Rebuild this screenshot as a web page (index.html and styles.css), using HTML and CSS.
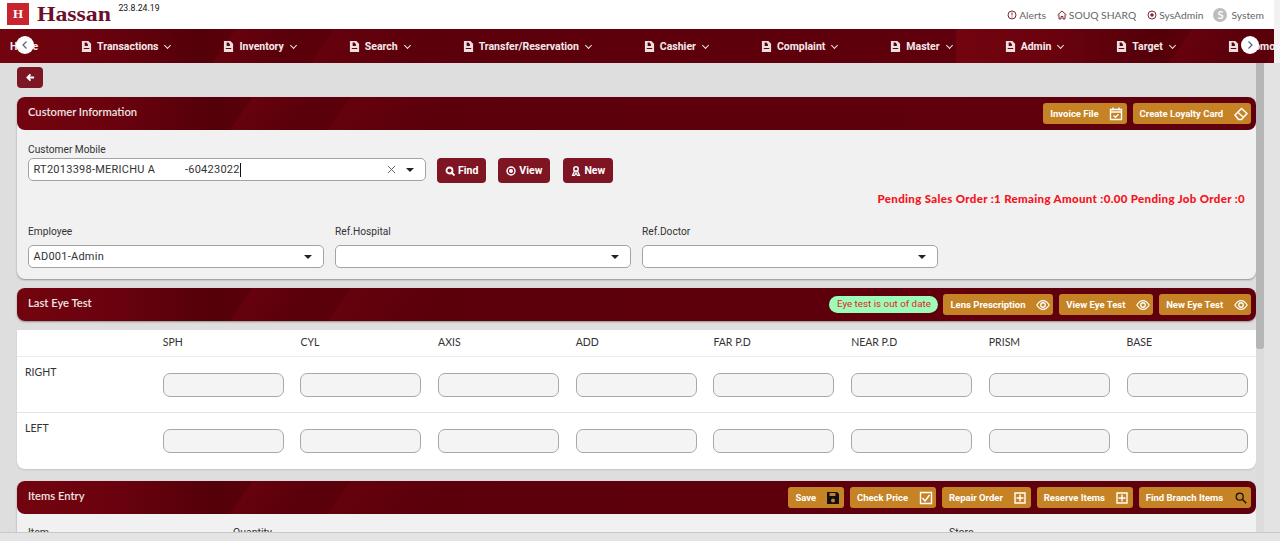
FILE: index.html
```html
<!DOCTYPE html>
<html lang="en">
<head>
    <meta charset="UTF-8">
    <title>Hassan</title>
    <link rel="stylesheet" href="styles.css">
</head>
<body>
    <!-- shared icons -->
    <svg class="icon-defs" width="0" height="0">
        <symbol id="i-doc" viewBox="0 0 12 12">
            <path fill="currentColor" fill-rule="evenodd" d="M1 0h7l3 3v9H1zM3 7.500v1.200h6V7.500zM4 1.500v4h3.500v-2L6 1.500z"/>
        </symbol>
        <symbol id="i-eye" viewBox="0 0 16 16">
            <path fill="none" stroke="currentColor" stroke-width="1.400" d="M1 8c2-3.400 4.400-5 7-5s5 1.600 7 5c-2 3.400-4.400 5-7 5s-5-1.600-7-5z"/>
            <circle cx="8" cy="8" r="2.600" fill="none" stroke="currentColor" stroke-width="1.500"/>
        </symbol>
        <symbol id="i-plus" viewBox="-1 -1 14 14">
            <path fill="none" stroke="currentColor" stroke-width="1.400" d="M1 1h10v10H1zM6 2.500v7M2.500 6h7"/>
        </symbol>
    </svg>

    <header class="topbar">
        <div class="brand">
            <span class="brand-mark">H</span>
            <span class="brand-name">Hassan</span>
            <span class="version">23.8.24.19</span>
        </div>
        <div class="top-links">
            <span class="top-link">
                <svg class="top-icon" viewBox="0 0 10 10"><circle cx="5" cy="5" r="4" fill="none" stroke="currentColor"/><path d="M5 2.500v3M5 6.500v1" stroke="currentColor"/></svg>
                Alerts
            </span>
            <span class="top-link">
                <svg class="top-icon" viewBox="0 0 10 10"><path d="M.5 5 5 1l4.500 4M2 4.500V9h2V6.500h2V9h2V4.500" fill="none" stroke="currentColor"/></svg>
                SOUQ SHARQ
            </span>
            <span class="top-link">
                <svg class="top-icon" viewBox="0 0 10 10"><circle cx="5" cy="5" r="4" fill="none" stroke="currentColor"/><circle cx="5" cy="5" r="1.800" fill="currentColor"/></svg>
                SysAdmin
            </span>
            <span class="top-link user-link"><span class="avatar">S</span>System</span>
        </div>
    </header>

    <nav class="menu banner">
        <a class="menu-item menu-home">Home</a>
        <a class="menu-item"><svg class="menu-doc"><use href="#i-doc"/></svg>Transactions<span class="chev"></span></a>
        <a class="menu-item"><svg class="menu-doc"><use href="#i-doc"/></svg>Inventory<span class="chev"></span></a>
        <a class="menu-item"><svg class="menu-doc"><use href="#i-doc"/></svg>Search<span class="chev"></span></a>
        <a class="menu-item"><svg class="menu-doc"><use href="#i-doc"/></svg>Transfer/Reservation<span class="chev"></span></a>
        <a class="menu-item"><svg class="menu-doc"><use href="#i-doc"/></svg>Cashier<span class="chev"></span></a>
        <a class="menu-item"><svg class="menu-doc"><use href="#i-doc"/></svg>Complaint<span class="chev"></span></a>
        <a class="menu-item"><svg class="menu-doc"><use href="#i-doc"/></svg>Master<span class="chev"></span></a>
        <a class="menu-item"><svg class="menu-doc"><use href="#i-doc"/></svg>Admin<span class="chev"></span></a>
        <a class="menu-item"><svg class="menu-doc"><use href="#i-doc"/></svg>Target<span class="chev"></span></a>
        <a class="menu-item"><svg class="menu-doc"><use href="#i-doc"/></svg>Promotion<span class="chev"></span></a>
        <span class="menu-arrow arrow-left"><svg viewBox="0 0 10 10"><path d="M6.500 1.500 3 5l3.500 3.500" fill="none" stroke="#5b6078" stroke-width="1.200"/></svg></span>
        <span class="menu-arrow arrow-right"><svg viewBox="0 0 10 10"><path d="M3.500 1.500 7 5 3.500 8.500" fill="none" stroke="#5b6078" stroke-width="1.200"/></svg></span>
    </nav>

    <main class="content">
        <button class="back-btn"><svg viewBox="0 0 10 10"><path d="M5 1.500 1.500 5 5 8.500M2 5h7" fill="none" stroke="#fff" stroke-width="2"/></svg></button>

        <!-- Customer Information -->
        <section class="card card-grey card-customer">
            <div class="card-head banner">
                <h2>Customer Information</h2>
                <div class="head-actions">
                    <button class="gold-btn">Invoice File
                        <svg class="gold-icon" viewBox="0 0 14 14"><path d="M1.500 2.500h11v10h-11zM1.500 5h11M4 .5v3M10 .5v3" fill="none" stroke="currentColor" stroke-width="1.400"/><path d="m4.500 8.500 2 1.800 3-3" fill="none" stroke="currentColor" stroke-width="1.400"/></svg>
                    </button>
                    <button class="gold-btn">Create Loyalty Card
                        <svg class="gold-icon" viewBox="0 0 14 14"><path d="M1 8 7.500 1.500 13 6.500 7.500 12.500H4.500zM4 5.500 9.800 10.500" fill="none" stroke="currentColor" stroke-width="1.500"/></svg>
                    </button>
                </div>
            </div>
            <div class="customer-body">
                <label class="field-label">Customer Mobile</label>
                <div class="find-row">
                    <div class="select select-mobile">
                        <span class="select-text">RT2013398-MERICHU A          -60423022</span><span class="text-cursor"></span>
                        <svg class="clear-x" viewBox="0 0 10 10"><path d="m1 1 8 8M9 1 1 9" stroke="#555" fill="none"/></svg>
                        <span class="caret"></span>
                    </div>
                    <button class="red-btn"><svg viewBox="0 0 10 10"><circle cx="4.500" cy="4.500" r="3" fill="none" stroke="#fff" stroke-width="1.800"/><path d="m6.500 6.500 3 3" stroke="#fff" stroke-width="1.800"/></svg>Find</button>
                    <button class="red-btn"><svg viewBox="0 0 10 10"><circle cx="5" cy="5" r="4" fill="none" stroke="#fff" stroke-width="1.400"/><circle cx="5" cy="5" r="2" fill="#fff"/></svg>View</button>
                    <button class="red-btn"><svg viewBox="0 0 10 10"><circle cx="5" cy="3" r="2.200" fill="none" stroke="#fff" stroke-width="1.500"/><path d="m3.500 5-2 4.500h2L5 7l1.500 2.500h2L6.500 5" fill="none" stroke="#fff" stroke-width="1.300"/></svg>New</button>
                </div>
                <p class="pending">Pending Sales Order :1 Remaing Amount :0.00 Pending Job Order :0</p>
                <div class="select-row">
                    <div class="select-col">
                        <label class="field-label">Employee</label>
                        <div class="select"><span class="select-text">AD001-Admin</span><span class="caret"></span></div>
                    </div>
                    <div class="select-col">
                        <label class="field-label">Ref.Hospital</label>
                        <div class="select"><span class="select-text"></span><span class="caret"></span></div>
                    </div>
                    <div class="select-col">
                        <label class="field-label">Ref.Doctor</label>
                        <div class="select"><span class="select-text"></span><span class="caret"></span></div>
                    </div>
                </div>
            </div>
        </section>

        <!-- Last Eye Test -->
        <section class="card">
            <div class="card-head banner">
                <h2>Last Eye Test</h2>
                <div class="head-actions">
                    <span class="status-pill">Eye test is out of date</span>
                    <button class="gold-btn">Lens Prescription <svg class="gold-icon"><use href="#i-eye"/></svg></button>
                    <button class="gold-btn">View Eye Test <svg class="gold-icon"><use href="#i-eye"/></svg></button>
                    <button class="gold-btn">New Eye Test <svg class="gold-icon"><use href="#i-eye"/></svg></button>
                </div>
            </div>
        </section>
        <section class="eye-table">
            <div class="eye-row eye-head">
                <span></span><span>SPH</span><span>CYL</span><span>AXIS</span><span>ADD</span><span>FAR P.D</span><span>NEAR P.D</span><span>PRISM</span><span>BASE</span>
            </div>
            <div class="eye-row eye-values">
                <span>RIGHT</span>
                <input class="eye-input"><input class="eye-input"><input class="eye-input"><input class="eye-input">
                <input class="eye-input"><input class="eye-input"><input class="eye-input"><input class="eye-input">
            </div>
            <div class="eye-row eye-values eye-last">
                <span>LEFT</span>
                <input class="eye-input"><input class="eye-input"><input class="eye-input"><input class="eye-input">
                <input class="eye-input"><input class="eye-input"><input class="eye-input"><input class="eye-input">
            </div>
        </section>

        <!-- Items Entry -->
        <section class="card card-grey card-items">
            <div class="card-head banner">
                <h2>Items Entry</h2>
                <div class="head-actions">
                    <button class="gold-btn">Save
                        <svg class="gold-icon icon-dark" viewBox="0 0 14 14"><path fill="currentColor" fill-rule="evenodd" d="M1 1h10l2 2v10H1zM3.500 2v3h6V2zM7 7.500a2 2 0 1 0 0 4 2 2 0 0 0 0-4z"/></svg>
                    </button>
                    <button class="gold-btn">Check Price
                        <svg class="gold-icon" viewBox="0 0 14 14"><path d="M1.500 1.500h11v11h-11zM3.500 7l2.500 3 4.500-6" fill="none" stroke="currentColor" stroke-width="1.400"/></svg>
                    </button>
                    <button class="gold-btn">Repair Order <svg class="gold-icon"><use href="#i-plus"/></svg></button>
                    <button class="gold-btn">Reserve Items <svg class="gold-icon"><use href="#i-plus"/></svg></button>
                    <button class="gold-btn">Find Branch Items
                        <svg class="gold-icon icon-dark" viewBox="-1 -1 16 16"><circle cx="5.500" cy="5.500" r="4" fill="none" stroke="currentColor" stroke-width="1.400"/><path d="m8.500 8.500 4.500 4.500" stroke="currentColor" stroke-width="1.600"/></svg>
                    </button>
                </div>
            </div>
            <div class="items-labels">
                <span>Item</span><span>Quantity</span><span>Store</span>
            </div>
        </section>
    </main>

    <div class="scroll-v"><span class="scroll-thumb"></span></div>
    <div class="scroll-h"></div>
</body>
</html>
```

FILE: styles.css
```css
html, body {
    margin: 0;
    height: 541px;
    overflow: hidden;
}
body {
    background: linear-gradient(#f2f2f2 63px, #e3e3e3 63px);
    font-family: "Roboto", Arial, sans-serif;
    color: #333;
}
.icon-defs {
    position: absolute;
}
button {
    font-family: inherit;
    border: none;
    padding: 0;
    cursor: pointer;
}

/* repeated dark red artwork used on the menu and card titles */
.banner {
    background-color: #5f000c;
    background-image:
        linear-gradient(125deg, transparent 0, transparent 24%, rgba(115, 3, 15, .5) 24.2%, rgba(95, 0, 12, 0) 30%, transparent 34%, rgba(115, 3, 15, .4) 34.2%, rgba(95, 0, 12, 0) 44%),
        linear-gradient(90deg, #72040f 0, #6a020e 10%, #530009 21%, #5a000b 24%, #5f000c 100%);
    background-size: 956px 100%;
}
.card-head.banner {
    background-repeat: no-repeat;
}

/* top bar */
.topbar {
    width: 1274px;
    height: 29px;
    background-color: #fff;
    display: flex;
    justify-content: space-between;
}
.brand {
    display: flex;
    align-items: flex-start;
    padding: 3px 0 0 7px;
}
.brand-mark {
    width: 22px;
    height: 22px;
    background-color: #c8252e;
    color: #fff;
    font-family: "Liberation Serif", serif;
    font-weight: bold;
    font-size: 13px;
    line-height: 22px;
    text-align: center;
}
.brand-name {
    margin-left: 8px;
    font-family: "Liberation Serif", serif;
    font-weight: bold;
    font-size: 22px;
    line-height: 21px;
    color: #6b0f2c;
    transform: scaleX(1.080);
    transform-origin: left;
}
.version {
    margin-left: 13px;
    font-size: 8.700px;
    line-height: 11px;
    color: #111;
}
.top-links {
    display: flex;
    align-items: center;
    gap: 11px;
    padding: 1px 10px 0 0;
    font-family: "Lato", sans-serif;
    font-size: 10.300px;
    color: #666;
}
.top-link {
    display: flex;
    align-items: center;
    gap: 2px;
}
.top-icon {
    width: 10px;
    height: 10px;
    color: #7c2a36;
}
.user-link {
    gap: 4px;
    margin-left: -1px;
}
.avatar {
    width: 14px;
    height: 14px;
    border-radius: 50%;
    background-color: #bdbdbd;
    color: #fff;
    font-weight: bold;
    font-size: 11px;
    line-height: 14px;
    text-align: center;
}

/* menu */
.menu {
    position: relative;
    width: 1274px;
    height: 34px;
    display: flex;
    align-items: center;
    overflow: hidden;
    white-space: nowrap;
}
.menu-item {
    flex: none;
    display: flex;
    align-items: center;
    padding: 0 26.500px;
    font-size: 10.500px;
    font-weight: bold;
    color: #f5eaea;
}
.menu-home {
    padding: 0 16.500px 0 10px;
}
.menu-doc {
    width: 11px;
    height: 11px;
    margin-right: 5px;
    color: #ecdfe0;
}
.chev {
    width: 4px;
    height: 4px;
    margin: -2px 0 0 7px;
    border-right: 1px solid #f0e4e4;
    border-bottom: 1px solid #f0e4e4;
    transform: rotate(45deg);
}
.menu-arrow {
    position: absolute;
    top: 7px;
    width: 18px;
    height: 18px;
    border-radius: 50%;
    background-color: #fff;
    display: flex;
    align-items: center;
    justify-content: center;
}
.menu-arrow svg {
    width: 10px;
    height: 10px;
}
.arrow-left {
    left: 16px;
}
.arrow-right {
    left: 1241px;
}

/* page */
.content {
    width: 1239px;
    height: 470px;
    padding: 4px 0 0 17px;
    overflow: hidden;
    background-color: #dedede;
}
.back-btn {
    display: block;
    width: 26px;
    height: 21px;
    background-color: #7c1524;
    border-radius: 4px;
}
.back-btn svg {
    display: block;
    width: 9px;
    height: 9px;
    margin: auto;
}
.card {
    margin-top: 9px;
    border-radius: 8px;
    box-shadow: 0 1px 2px rgba(0, 0, 0, .35);
}
.card-grey {
    background-color: #f1f1f1;
}
.card-head {
    height: 33px;
    border-radius: 8px;
    display: flex;
    align-items: center;
    justify-content: space-between;
    padding: 0 5px 0 11px;
}
.card-head h2 {
    margin: 0 0 5px;
    font-family: "Lato", sans-serif;
    font-size: 11.200px;
    font-weight: 600;
    color: #f1e4e4;
}
.head-actions {
    display: flex;
    align-items: center;
    gap: 6px;
}
.gold-btn {
    display: flex;
    align-items: center;
    justify-content: space-between;
    gap: 10.300px;
    height: 21px;
    padding: 0 3.500px 0 7px;
    border-radius: 3px;
    background-color: #c58325;
    color: #fff;
    font-size: 9.500px;
    font-weight: bold;
    white-space: nowrap;
}
.gold-icon {
    width: 14px;
    height: 14px;
    color: #fff;
}
.gold-btn .icon-dark {
    color: #111;
}
.status-pill {
    width: 109px;
    height: 17px;
    margin-right: -1px;
    border-radius: 9px;
    background-color: #9cfdb8;
    color: #e8202a;
    font-size: 9.800px;
    line-height: 16px;
    text-align: center;
}

/* customer information */
.card-customer {
    height: 182px;
}
.customer-body {
    padding: 14px 11px 0;
}
.field-label {
    display: block;
    font-size: 10.200px;
    line-height: 12px;
    color: #333;
}
.find-row {
    display: flex;
    align-items: flex-start;
    margin-top: 2px;
}
.select {
    position: relative;
    box-sizing: border-box;
    height: 23px;
    padding-left: 4.500px;
    border: 1px solid #a3a3a3;
    border-radius: 5px;
    background-color: #fff;
    display: flex;
    align-items: center;
    font-size: 11px;
    letter-spacing: .25px;
    color: #333;
}
.select-mobile {
    width: 398px;
    margin-right: 11px;
}
.select-text {
    white-space: pre;
}
.text-cursor {
    width: 1px;
    height: 14px;
    background-color: #111;
}
.clear-x {
    position: absolute;
    right: 29px;
    top: 6px;
    width: 9px;
    height: 9px;
}
.caret {
    position: absolute;
    right: 11px;
    top: 9px;
    border-left: 4px solid transparent;
    border-right: 4px solid transparent;
    border-top: 4px solid #222;
}
.red-btn {
    display: flex;
    align-items: center;
    justify-content: center;
    gap: 3px;
    height: 25px;
    padding: 0 8px;
    margin-right: 12px;
    border-radius: 4px;
    background-color: #7f1523;
    color: #fff;
    font-size: 10.500px;
    font-weight: bold;
}
.red-btn:last-child {
    margin-left: 1px;
}
.red-btn svg {
    width: 10px;
    height: 10px;
}
.pending {
    margin: 9px 0 0;
    font-family: "Lato", sans-serif;
    font-size: 11.500px;
    line-height: 14px;
    font-weight: 900;
    letter-spacing: .33px;
    color: #f5141c;
    text-align: right;
}
.select-row {
    display: flex;
    gap: 11px;
    margin-top: 20px;
}
.select-col {
    width: 296px;
}
.select-col .select {
    margin-top: 7px;
}

/* eye test table */
.eye-table {
    margin-top: 9px;
    background-color: #fff;
    border-radius: 0 0 8px 8px;
    box-shadow: 0 1px 2px rgba(0, 0, 0, .12);
    font-family: "Lato", sans-serif;
    font-size: 10.500px;
    color: #333;
}
.eye-row {
    display: grid;
    grid-template-columns: repeat(9, 121px);
    column-gap: 16.700px;
    padding: 0 8px;
}
.eye-head {
    height: 24px;
    padding-bottom: 2px;
    align-items: center;
    border-bottom: 1px solid #ebebf2;
}
.eye-values {
    box-sizing: border-box;
    height: 56px;
    padding-top: 10px;
    border-bottom: 1px solid #e4e4e4;
}
.eye-values span {
    line-height: 11px;
}
.eye-last {
    border-bottom: none;
}
.eye-input {
    box-sizing: border-box;
    width: 121px;
    height: 24px;
    margin-top: 6px;
    border: 1px solid #a8a8a8;
    border-radius: 7px;
    background-color: #f4f4f4;
}

/* items entry */
.card-items {
    margin-top: 12px;
    height: 80px;
}
.items-labels {
    padding: 13px 0 0 11px;
    font-size: 10.500px;
    line-height: 12px;
    display: grid;
    grid-template-columns: 205px 716px 1fr;
}

/* window scrollbars */
.scroll-v {
    position: fixed;
    top: 63px;
    left: 1256px;
    width: 8px;
    height: 470px;
    background-color: #dcdcdc;
}
.scroll-thumb {
    display: block;
    height: 286px;
    border-radius: 0 0 3px 3px;
    background-color: #b6b6b6;
}
.scroll-h {
    position: fixed;
    left: 0;
    top: 532px;
    width: 1280px;
    height: 9px;
    border-top: 1px solid #c8c8c8;
    background-color: #e4e4e4;
}
```
